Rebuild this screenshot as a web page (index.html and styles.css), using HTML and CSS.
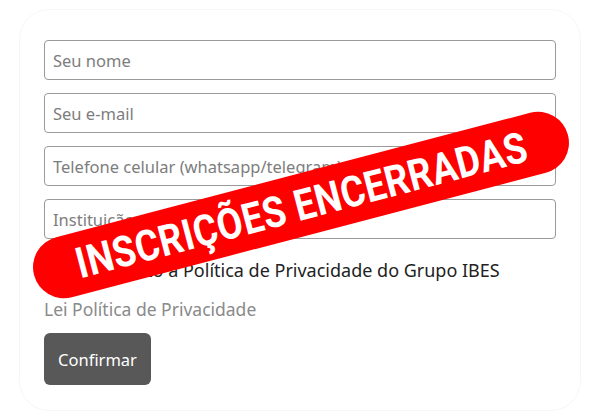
FILE: index.html
```html
<!DOCTYPE html>
<html lang="pt-BR">

<head>
    <meta charset="UTF-8">
    <meta name="viewport" content="width=device-width, initial-scale=1.0">
    <title>Inscrição</title>
    <link rel="stylesheet" href="styles.css">
</head>

<body>
    <div class="card">
        <form action="#" class="form">
            <input type="text" class="field" placeholder="Seu nome">
            <input type="email" class="field" placeholder="Seu e-mail">
            <input type="tel" class="field" placeholder="Telefone celular (whatsapp/telegram)">
            <input type="text" class="field" placeholder="Instituição">
            <label class="check"><input type="checkbox"> Li e aceito a Política de Privacidade do Grupo IBES</label>
            <a href="#" class="policy">Lei Política de Privacidade</a>
            <button type="button" class="confirm">Confirmar</button>
        </form>
        <div class="stamp"><span>INSCRIÇÕES ENCERRADAS</span></div>
    </div>
</body>

</html>
```

FILE: styles.css
```css
* {
    margin: 0;
    padding: 0;
    box-sizing: border-box;
}

body {
    background: #fff;
    font-family: "Noto Sans", "Open Sans", sans-serif;
    padding: 9px 19px;
}

.card {
    position: relative;
    height: 402px;
    border: 1px solid #f7f7f7;
    border-radius: 30px;
    padding: 30px 24px;
}

.form {
    display: flex;
    flex-direction: column;
    align-items: flex-start;
}

.field {
    width: 512px;
    height: 40px;
    margin-bottom: 13px;
    padding: 0 8px;
    border: 1px solid #9a9a9a;
    border-radius: 4px;
    font-family: inherit;
    font-size: 16.5px;
    color: #333;
}

.field::placeholder {
    color: #7d7d7d;
}

.check {
    display: flex;
    align-items: center;
    gap: 14px;
    margin-top: 6px;
    height: 24px;
    font-size: 18px;
    color: #222;
}

.check input {
    margin-left: 8px;
}

.policy {
    margin-top: 15px;
    font-size: 17.5px;
    line-height: 24px;
    color: #8a8a8a;
    text-decoration: none;
}

.confirm {
    margin-top: 12px;
    width: 107px;
    height: 52px;
    border: none;
    border-radius: 6px;
    background: #585858;
    color: #fff;
    font-family: inherit;
    font-size: 16.5px;
}

.stamp {
    position: absolute;
    left: 5px;
    top: 164px;
    width: 552px;
    height: 62px;
    border-radius: 31px;
    background: #ff0000;
    transform: rotate(-14.7deg);
    display: flex;
    align-items: center;
    justify-content: center;
}

.stamp span {
    display: inline-block;
    color: #fff;
    font-family: Roboto, "Liberation Sans", sans-serif;
    font-weight: 700;
    font-size: 43px;
    letter-spacing: 0.5px;
    transform: scaleX(0.86);
    white-space: nowrap;
}
```
